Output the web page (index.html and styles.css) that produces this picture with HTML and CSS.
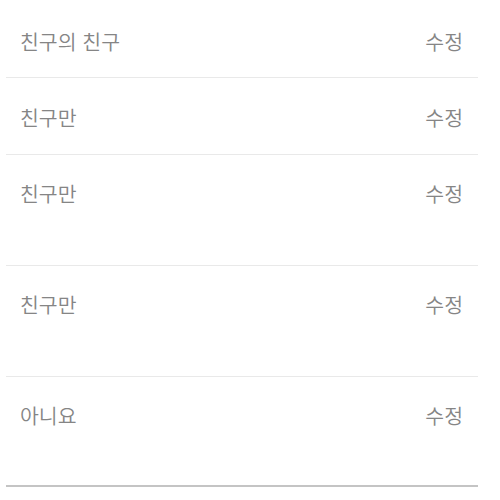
FILE: index.html
```html
<!DOCTYPE html>
<html lang="ko">
<head>
<meta charset="utf-8">
<link rel="stylesheet" href="styles.css">
</head>
<body>
<ul class="list">
  <li class="row"><span class="label">친구의 친구</span><span class="edit">수정</span></li>
  <li class="row"><span class="label">친구만</span><span class="edit">수정</span></li>
  <li class="row tall"><span class="label">친구만</span><span class="edit">수정</span></li>
  <li class="row tall"><span class="label">친구만</span><span class="edit">수정</span></li>
  <li class="row tall last"><span class="label">아니요</span><span class="edit">수정</span></li>
</ul>
</body>
</html>
```
FILE: styles.css
```css
html, body {
  margin: 0;
  padding: 0;
  background: #ffffff;
}
body {
  font-family: "Noto Sans CJK KR", "Noto Sans", sans-serif;
  color: #858585;
}
.list {
  list-style: none;
  margin: 0 0 0 6px;
  padding: 0;
  width: 472px;
}
.row {
  display: flex;
  justify-content: space-between;
  align-items: flex-start;
  height: 77px;
  padding: 25px 15px 0 14px;
  box-sizing: border-box;
  border-bottom: 1px solid #e9e9e9;
  font-size: 20.5px;
  line-height: 28px;
  font-weight: 350;
}
.row:first-child {
  height: 78px;
  padding-top: 27px;
}
.row.tall {
  height: 111px;
  padding-top: 24px;
}
.row.last {
  height: 110px;
  border-bottom: 2px solid #c4c4c4;
}
.edit {
  color: #858585;
}
```
